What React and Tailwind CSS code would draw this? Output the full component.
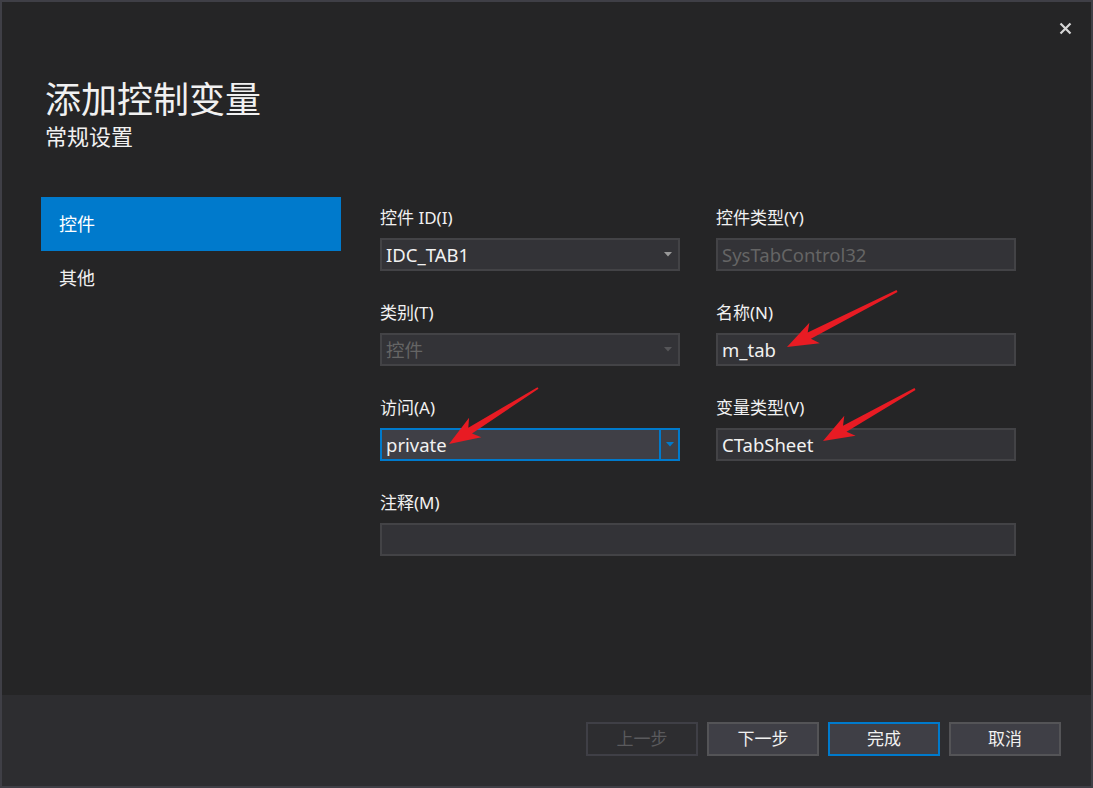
import React from "react";

const FONT = { fontFamily: '"Noto Sans", "Noto Sans CJK SC", sans-serif' };

function arrowPoints(x1, y1, x2, y2) {
  const dx = x2 - x1;
  const dy = y2 - y1;
  const len = Math.hypot(dx, dy);
  const ux = dx / len;
  const uy = dy / len;
  const nx = -uy;
  const ny = ux;
  const H = 31;
  const W = 11.5;
  const bx = x2 - ux * H;
  const by = y2 - uy * H;
  const p = (x, y) => `${x.toFixed(1)},${y.toFixed(1)}`;
  return [
    p(x1 + nx * 1, y1 + ny * 1),
    p(bx + ux * 6 + nx * 3.5, by + uy * 6 + ny * 3.5),
    p(bx + nx * W, by + ny * W),
    p(x2, y2),
    p(bx - nx * W, by - ny * W),
    p(bx + ux * 6 - nx * 3.5, by + uy * 6 - ny * 3.5),
    p(x1 - nx * 1, y1 - ny * 1),
  ].join(" ");
}

function Caret({ color }) {
  return (
    <svg width="8" height="5" viewBox="0 0 8 5">
      <path d="M0 0 L8 0 L4 4.5 Z" fill={color} />
    </svg>
  );
}

function Field({ label, children, className = "" }) {
  return (
    <div className={className}>
      <div className="h-[29px] leading-[29px] text-[17px] text-[#f1f1f1] mb-[6px]">{label}</div>
      {children}
    </div>
  );
}

function Box({ value, disabled, combo }) {
  return (
    <div className="h-[33px] bg-[#333337] border-2 border-[#434346] flex items-center">
      <span className={`flex-1 pl-[4px] text-[18.5px] ${disabled ? "text-[#656565]" : "text-[#f1f1f1]"}`}>
        {value}
      </span>
      {combo && (
        <span className="pr-[6px] flex items-center">
          <Caret color={disabled ? "#555558" : "#999999"} />
        </span>
      )}
    </div>
  );
}

export default function App() {
  return (
    <div
      className="relative w-[1093px] h-[788px] bg-[#252526] border-2 border-[#3f3f46] flex flex-col overflow-hidden"
      style={FONT}
    >
      <button className="absolute right-[19px] top-[19px] w-[14px] h-[14px] flex items-center justify-center">
        <svg width="13" height="13" viewBox="0 0 13 13">
          <path d="M1.5 1.5 L11.5 11.5 M11.5 1.5 L1.5 11.5" stroke="#d6d6d6" strokeWidth="2.2" />
        </svg>
      </button>

      <div className="flex-1 pl-[39px] pt-[76px]">
        <div className="pl-[4px]">
          <div className="text-[36px] leading-[44px] text-[#f1f1f1]">添加控制变量</div>
          <div className="text-[22px] leading-[28px] text-[#f1f1f1]">常规设置</div>
        </div>

        <div className="flex mt-[47px]">
          <div className="w-[300px] flex flex-col">
            <div className="h-[54px] bg-[#007acc] flex items-center pl-[18px] text-[18px] text-white">控件</div>
            <div className="h-[54px] flex items-center pl-[18px] text-[18px] text-[#f1f1f1]">其他</div>
          </div>

          <div className="ml-[39px] mt-[6px] grid grid-cols-[300px_300px] gap-x-[36px] gap-y-[27px]">
            <Field label="控件 ID(I)">
              <Box value="IDC_TAB1" combo />
            </Field>
            <Field label="控件类型(Y)">
              <Box value="SysTabControl32" disabled />
            </Field>
            <Field label="类别(T)">
              <Box value="控件" disabled combo />
            </Field>
            <Field label="名称(N)">
              <Box value="m_tab" />
            </Field>
            <Field label="访问(A)">
              <div className="h-[33px] bg-[#3f3f46] border-2 border-[#007acc] flex items-center">
                <span className="flex-1 pl-[4px] text-[18.5px] text-[#f1f1f1]">private</span>
                <span className="h-full w-[19px] border-l-2 border-[#007acc] flex items-center justify-center">
                  <Caret color="#007acc" />
                </span>
              </div>
            </Field>
            <Field label="变量类型(V)">
              <Box value="CTabSheet" />
            </Field>
            <Field label="注释(M)" className="col-span-2">
              <Box value="" />
            </Field>
          </div>
        </div>
      </div>

      <div className="h-[91px] bg-[#2d2d30] flex items-center justify-end gap-[9px] pr-[30px] pb-[4px]">
        <button className="w-[112px] h-[34px] border-2 border-[#3f3f46] bg-[#2d2d30] text-[17px] text-[#5a5a5d]">上一步</button>
        <button className="w-[112px] h-[34px] border-2 border-[#545457] bg-[#3f3f46] text-[17px] text-[#f1f1f1]">下一步</button>
        <button className="w-[112px] h-[34px] border-2 border-[#007acc] bg-[#3f3f46] text-[17px] text-[#f1f1f1]">完成</button>
        <button className="w-[112px] h-[34px] border-2 border-[#545457] bg-[#3f3f46] text-[17px] text-[#f1f1f1]">取消</button>
      </div>

      <svg className="absolute left-[-2px] top-[-2px] pointer-events-none" width="1093" height="788">
        <polygon points={arrowPoints(897, 291, 787, 347)} fill="#e81b23" />
        <polygon points={arrowPoints(538, 388, 449, 444)} fill="#e81b23" />
        <polygon points={arrowPoints(915, 389, 823, 441)} fill="#e81b23" />
      </svg>
    </div>
  );
}
